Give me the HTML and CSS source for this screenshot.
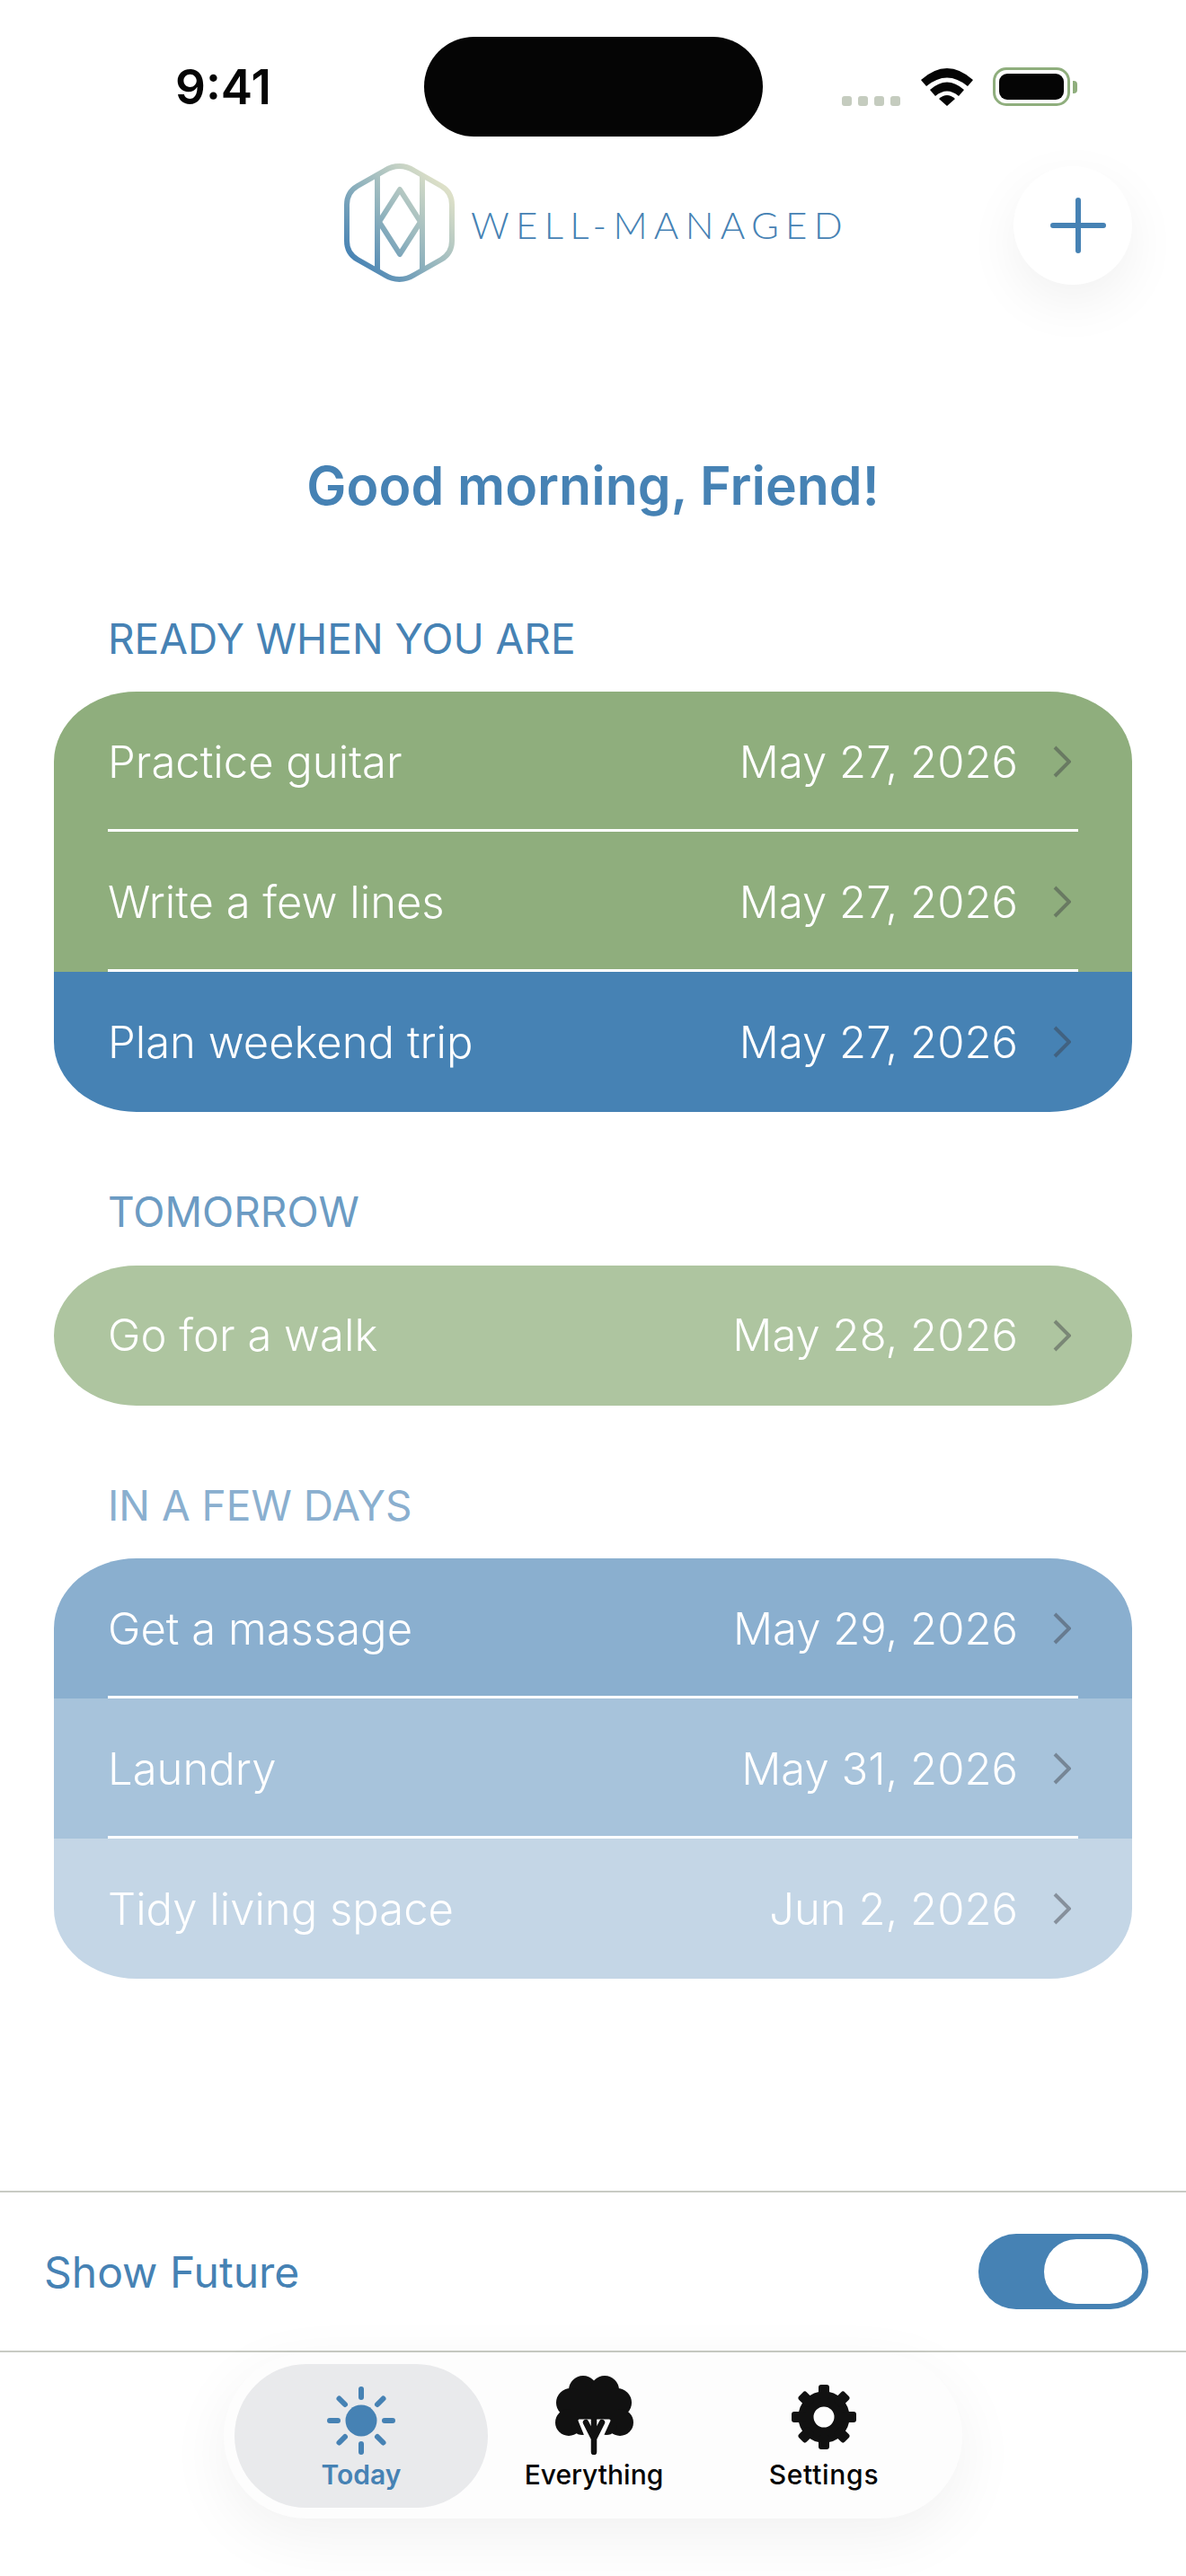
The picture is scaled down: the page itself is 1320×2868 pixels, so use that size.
FILE: index.html
```html
<!DOCTYPE html>
<html lang="en">
<head>
    <meta charset="UTF-8">
    <meta name="viewport" content="width=device-width, initial-scale=1.0">
    <title>Well-Managed</title>
    <link rel="stylesheet" href="styles.css">
</head>
<body>
    <div class="status-bar">
        <span class="clock">9:41</span>
        <div class="island"></div>
        <div class="status-icons">
            <div class="signal"><i></i><i></i><i></i><i></i></div>
            <svg class="wifi" width="58" height="42" viewBox="0 0 58 42">
                <path d="M0 13 Q29 -13 58 13 L52 20 Q29 1 6 20 Z" fill="#050505"/>
                <path d="M10 24 Q29 7 48 24 L42 31 Q29 20 16 31 Z" fill="#050505"/>
                <path d="M20 34 Q29 26 38 34 L29 42 Z" fill="#050505"/>
            </svg>
            <div class="battery"><div class="battery-fill"></div></div>
            <div class="battery-nub"></div>
        </div>
    </div>

    <header class="top">
        <div></div>
        <div class="logo">
            <svg width="123" height="132" viewBox="0 0 123 132" fill="none">
                <defs>
                    <linearGradient id="logoGrad" gradientUnits="userSpaceOnUse" x1="10" y1="110" x2="110" y2="25">
                        <stop offset="0" stop-color="#4682b4"/>
                        <stop offset="0.45" stop-color="#8fb2bd"/>
                        <stop offset="1" stop-color="#dde0c8"/>
                    </linearGradient>
                </defs>
                <g stroke="url(#logoGrad)" stroke-width="6" stroke-linejoin="round">
                    <path d="M61.5 3 Q70 3 78 8 L108 25 Q120 32 120 46 V86 Q120 100 108 107 L78 124 Q70 129 61.5 129 Q53 129 45 124 L15 107 Q3 100 3 86 V46 Q3 32 15 25 L45 8 Q53 3 61.5 3 Z"/>
                    <path d="M37 13 V119 M87 13 V119"/>
                    <path d="M62 29 L85 65 L62 101 L39 65 Z"/>
                </g>
            </svg>
            <span class="logo-text">WELL-MANAGED</span>
        </div>
        <button class="add-btn">
            <svg width="62" height="62" viewBox="0 0 62 62">
                <path d="M31 3 V59 M3 31 H59" stroke="#4682b4" stroke-width="6" stroke-linecap="round"/>
            </svg>
        </button>
    </header>

    <h1 class="greeting">Good morning, Friend!</h1>

    <main class="lists">
        <section>
            <h2 class="list-title">READY WHEN YOU ARE</h2>
            <div class="card">
                <div class="row green">
                    <span class="name">Practice guitar</span>
                    <span class="date">May 27, 2026</span>
                    <svg class="chev" width="20" height="36" viewBox="0 0 20 36"><path d="M2 2 L18 18 L2 34"/></svg>
                </div>
                <div class="row green">
                    <span class="name">Write a few lines</span>
                    <span class="date">May 27, 2026</span>
                    <svg class="chev" width="20" height="36" viewBox="0 0 20 36"><path d="M2 2 L18 18 L2 34"/></svg>
                </div>
                <div class="row blue">
                    <span class="name">Plan weekend trip</span>
                    <span class="date">May 27, 2026</span>
                    <svg class="chev" width="20" height="36" viewBox="0 0 20 36"><path d="M2 2 L18 18 L2 34"/></svg>
                </div>
            </div>
        </section>

        <section>
            <h2 class="list-title tomorrow">TOMORROW</h2>
            <div class="card">
                <div class="row green-light">
                    <span class="name">Go for a walk</span>
                    <span class="date">May 28, 2026</span>
                    <svg class="chev" width="20" height="36" viewBox="0 0 20 36"><path d="M2 2 L18 18 L2 34"/></svg>
                </div>
            </div>
        </section>

        <section>
            <h2 class="list-title later">IN A FEW DAYS</h2>
            <div class="card">
                <div class="row blue-1">
                    <span class="name">Get a massage</span>
                    <span class="date">May 29, 2026</span>
                    <svg class="chev" width="20" height="36" viewBox="0 0 20 36"><path d="M2 2 L18 18 L2 34"/></svg>
                </div>
                <div class="row blue-2">
                    <span class="name">Laundry</span>
                    <span class="date">May 31, 2026</span>
                    <svg class="chev" width="20" height="36" viewBox="0 0 20 36"><path d="M2 2 L18 18 L2 34"/></svg>
                </div>
                <div class="row blue-3">
                    <span class="name">Tidy living space</span>
                    <span class="date">Jun 2, 2026</span>
                    <svg class="chev" width="20" height="36" viewBox="0 0 20 36"><path d="M2 2 L18 18 L2 34"/></svg>
                </div>
            </div>
        </section>
    </main>

    <div class="future-row">
        <span>Show Future</span>
        <div class="toggle"><div class="thumb"></div></div>
    </div>

    <nav class="tab-wrap">
        <div class="tab-bar">
            <div class="tab active">
                <svg width="76" height="76" viewBox="0 0 76 76">
                    <circle cx="38" cy="38" r="17.5" fill="#4682b4"/>
                    <g stroke="#4682b4" stroke-width="6" stroke-linecap="round">
                        <path d="M38 3 V12 M38 64 V73 M3 38 H12 M64 38 H73"/>
                        <path d="M13.5 13.5 L20 20 M62.5 13.5 L56 20 M13.5 62.5 L20 56 M62.5 62.5 L56 56"/>
                    </g>
                </svg>
                <span>Today</span>
            </div>
            <div class="tab everything">
                <svg width="87" height="88" viewBox="0 0 87 88">
                    <g fill="#111">
                        <circle cx="31" cy="16" r="16"/>
                        <circle cx="55" cy="16" r="16"/>
                        <circle cx="17" cy="30" r="16"/>
                        <circle cx="69" cy="30" r="16"/>
                        <circle cx="15" cy="52" r="15"/>
                        <circle cx="72" cy="52" r="15"/>
                        <circle cx="30" cy="54" r="12"/>
                        <circle cx="57" cy="54" r="12"/>
                        <rect x="17" y="16" width="53" height="36"/>
                    </g>
                    <path d="M27 50 L39 50 L43 60 L47 50 L60 50 L50 72 L36 72 Z" fill="#fdfdfd" stroke="#fdfdfd" stroke-width="3" stroke-linejoin="round"/>
                    <path d="M43 85 V68 M43 70 L34 52 M43 70 L52 52 M43 68 V50" fill="none" stroke="#111" stroke-width="6.5" stroke-linecap="round"/>
                </svg>
                <span>Everything</span>
            </div>
            <div class="tab settings">
                <svg width="72" height="72" viewBox="0 0 72 72">
                    <circle cx="36" cy="36" r="20" fill="none" stroke="#111" stroke-width="17"/>
                    <g fill="#111">
                        <rect x="30" y="0" width="12" height="16" rx="3"/>
                        <rect x="30" y="0" width="12" height="16" rx="3" transform="rotate(45 36 36)"/>
                        <rect x="30" y="0" width="12" height="16" rx="3" transform="rotate(90 36 36)"/>
                        <rect x="30" y="0" width="12" height="16" rx="3" transform="rotate(135 36 36)"/>
                        <rect x="30" y="0" width="12" height="16" rx="3" transform="rotate(180 36 36)"/>
                        <rect x="30" y="0" width="12" height="16" rx="3" transform="rotate(225 36 36)"/>
                        <rect x="30" y="0" width="12" height="16" rx="3" transform="rotate(270 36 36)"/>
                        <rect x="30" y="0" width="12" height="16" rx="3" transform="rotate(315 36 36)"/>
                    </g>
                </svg>
                <span>Settings</span>
            </div>
        </div>
    </nav>
</body>
</html>
```

FILE: styles.css
```css
/* Page */
body {
    font-family: Inter, "Noto Sans", sans-serif;
    background-color: #fff;
    color: #4682b4;
    margin: 0;
    width: 1320px;
    height: 2868px;
    display: flex;
    flex-direction: column;
    overflow: hidden;
}

/* Status bar */
.status-bar {
    height: 111px;
    padding: 41px 0 0 0;
    position: relative;
    display: flex;
    justify-content: center;
}

.clock {
    position: absolute;
    left: 195px;
    top: 65px;
    font-size: 53px;
    line-height: 64px;
    font-weight: 600;
    color: #050505;
}

.island {
    width: 377px;
    height: 111px;
    border-radius: 56px;
    background-color: #050505;
}

.status-icons {
    position: absolute;
    left: 937px;
    top: 75px;
    display: flex;
    align-items: flex-end;
}

.signal {
    display: flex;
    gap: 7px;
    margin-right: 23px;
}

.signal i {
    width: 11px;
    height: 11px;
    border-radius: 3px;
    background-color: #c5ccbf;
}

.battery {
    margin-left: 22px;
    width: 86px;
    height: 43px;
    box-sizing: border-box;
    border: 3px solid #8fae7d;
    border-radius: 15px;
    padding: 4px;
}

.battery-fill {
    height: 100%;
    border-radius: 9px;
    background-color: #050505;
}

.battery-nub {
    width: 5px;
    height: 14px;
    margin: 0 0 14px 3px;
    border-radius: 0 4px 4px 0;
    background-color: #8fae7d;
}

/* Logo row */
.top {
    display: grid;
    grid-template-columns: 1fr auto 1fr;
    margin-top: 30px;
    height: 133px;
    align-items: start;
}

.logo {
    display: flex;
    align-items: center;
    gap: 18px;
    margin-left: 8px;
}

.logo-text {
    font-family: Lato, sans-serif;
    font-weight: 300;
    font-size: 42px;
    letter-spacing: 7.3px;
    margin-top: 4px;
}

.add-btn {
    justify-self: end;
    margin: 3px 60px 0 0;
    width: 132px;
    height: 132px;
    padding: 0 0 0 12px;
    border: none;
    border-radius: 50%;
    background-color: #fff;
    box-shadow: 0 20px 60px rgba(0, 0, 0, 0.06);
    display: flex;
    align-items: center;
    justify-content: center;
}

.greeting {
    margin: 190px 0 0 0;
    text-align: center;
    font-size: 59px;
    line-height: 72px;
    font-weight: 600;
}

/* Lists */
.lists {
    margin: 0 60px;
    display: flex;
    flex-direction: column;
    gap: 83px;
    padding-top: 105.5px;
}

.list-title {
    margin: 0 0 31.5px 60px;
    font-size: 46px;
    line-height: 56px;
    font-weight: 400;
}

.list-title.tomorrow {
    color: #6b9bc3;
}

.list-title.later {
    color: #8aafcf;
}

.card {
    border-radius: 92px / 78px;
    overflow: hidden;
}

.row {
    height: 156px;
    box-sizing: border-box;
    margin: 0;
    padding: 0 68px 0 60px;
    display: flex;
    align-items: center;
    color: #fff;
    font-size: 49px;
    font-weight: 300;
    position: relative;
}

/* line under each row, stops short of the card edges */
.row:not(:last-child)::after {
    content: "";
    position: absolute;
    left: 60px;
    right: 60px;
    bottom: 0;
    height: 3px;
    background-color: #fff;
}

.name {
    flex: 1;
}

.date {
    margin-right: 39px;
}

.chev {
    fill: none;
    stroke: rgba(60, 60, 67, 0.45);
    stroke-width: 4;
}

.green { background-color: #8fae7d; }
.blue { background-color: #4682b4; }
.green-light { background-color: #aec5a0; }
.blue-1 { background-color: #8aafcf; }
.blue-2 { background-color: #a7c3db; }
.blue-3 { background-color: #c4d6e6; }

/* Show Future */
.future-row {
    position: absolute;
    top: 2439px;
    left: 0;
    width: 1320px;
    height: 180px;
    box-sizing: border-box;
    border-top: 2px solid #c8cbc4;
    border-bottom: 2px solid #c8cbc4;
    padding: 0 42px 0 49px;
    display: flex;
    align-items: center;
    justify-content: space-between;
    font-size: 48px;
}

.toggle {
    width: 189px;
    height: 84px;
    box-sizing: border-box;
    padding: 6px 7px;
    border-radius: 42px;
    background-color: #4682b4;
    display: flex;
    justify-content: flex-end;
}

.thumb {
    width: 109px;
    height: 72px;
    border-radius: 36px;
    background-color: #fff;
}

/* Tab bar */
.tab-wrap {
    position: absolute;
    top: 2620px;
    left: 249px;
}

.tab-bar {
    width: 822px;
    height: 184px;
    box-sizing: border-box;
    padding: 12px 16px 12px 12px;
    border-radius: 92px;
    background-color: #fdfdfd;
    box-shadow: 0 20px 70px rgba(0, 0, 0, 0.06);
    display: flex;
}

.tab {
    display: flex;
    flex-direction: column;
    align-items: center;
    justify-content: flex-end;
    padding-bottom: 18px;
    box-sizing: border-box;
    font-size: 30px;
    line-height: 38px;
    font-weight: 500;
    color: #050505;
}

.tab svg {
    margin-bottom: 3px;
}

.tab.active {
    width: 282px;
    border-radius: 80px;
    background-color: #e9eaec;
    color: #4682b4;
    font-weight: 600;
}

.tab.everything {
    width: 236px;
}

.tab.settings {
    width: 276px;
    letter-spacing: 0.7px;
}

.tab.settings svg {
    margin-bottom: 9px;
}
```
